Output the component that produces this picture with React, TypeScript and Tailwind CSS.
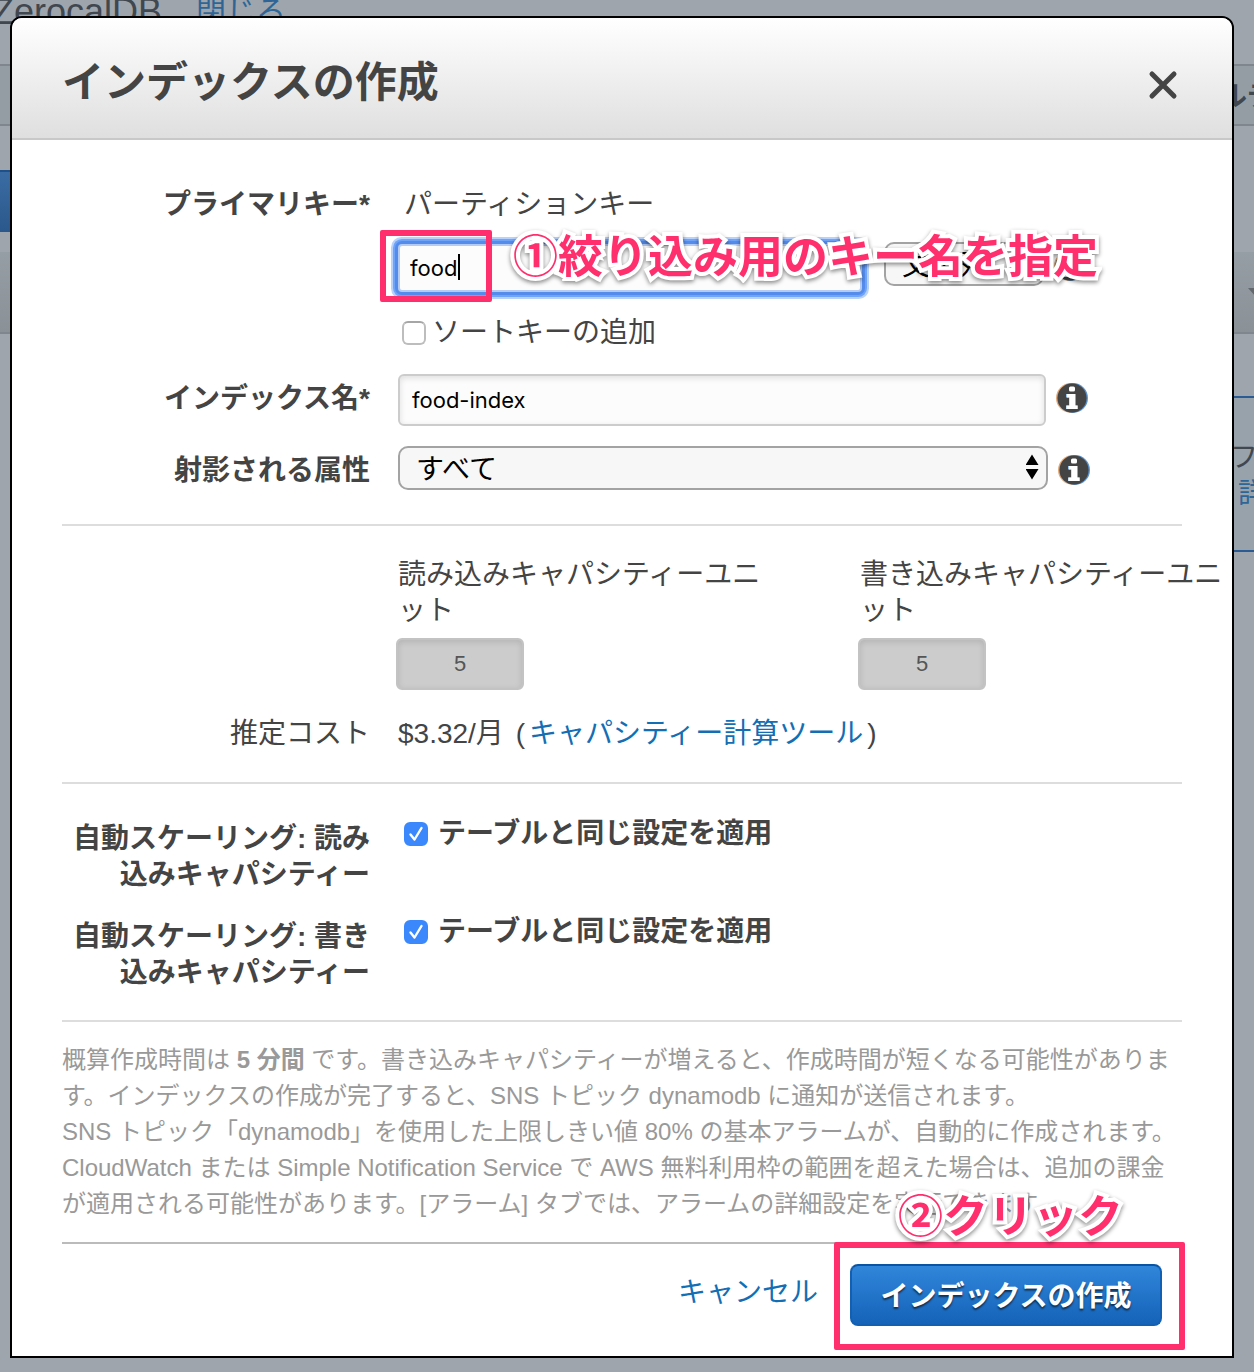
import { useState } from "react"
import type { ReactNode } from "react"

function InfoIcon() {
  return (
    <svg viewBox="0 0 32 32" className="h-8 w-8 shrink-0" aria-hidden="true">
      <circle cx="15" cy="16" r="15" fill="#e0a878" />
      <circle cx="17" cy="16" r="15" fill="#5b93cf" />
      <circle cx="16" cy="16" r="14.6" fill="#444" />
      <rect x="13" y="4.5" width="6" height="5" rx="1.5" fill="#fff" />
      <path d="M10 12h9v11.5h2.8V27H10v-3.5h3v-8h-3z" fill="#9cc4ee" />
      <path d="M11 12h8.5v11.5h2V27H10.5v-3.5h3v-8H11z" fill="#fff" />
    </svg>
  )
}

function SelectArrows() {
  return (
    <svg viewBox="0 0 14 26" className="pointer-events-none absolute right-2 top-2 h-[26px] w-[14px]" aria-hidden="true">
      <path d="M6 0.5l6.5 10.5H-.5zM6 25.5l6.5-10.5H-.5z" fill="#000" />
    </svg>
  )
}

function Checkbox({ id, checked, onChange }: { id: string; checked: boolean; onChange: (v: boolean) => void }) {
  return (
    <span className="grid h-6 w-6 shrink-0">
      <input
        id={id}
        type="checkbox"
        checked={checked}
        onChange={(e) => onChange(e.target.checked)}
        className="col-start-1 row-start-1 h-6 w-6 appearance-none rounded-md border-2 border-[#bdbdbd] border-t-[#a6a6a6] bg-white checked:border-[#3b88fd] checked:bg-[#3b88fd]"
      />
      {checked && (
        <svg viewBox="0 0 24 24" className="pointer-events-none col-start-1 row-start-1 h-6 w-6" aria-hidden="true">
          <path d="M6.5 12.5l4 5L17.5 6" fill="none" stroke="#fff" strokeWidth="2.4" strokeLinecap="round" strokeLinejoin="round" />
        </svg>
      )}
    </span>
  )
}

function AutoScalingRow({ id, label, checked, onChange }: { id: string; label: string; checked: boolean; onChange: (v: boolean) => void }) {
  return (
    <div className="flex gap-[34px] font-bold">
      <div className="w-[308px] shrink-0 pt-0.5 text-right">{label}</div>
      <div className="flex h-[30px] items-center gap-[10px]">
        <Checkbox id={id} checked={checked} onChange={onChange} />
        <label htmlFor={id}>テーブルと同じ設定を適用</label>
      </div>
    </div>
  )
}

function Callout({ children }: { children: ReactNode }) {
  return (
    <span className="whitespace-nowrap text-[45px] leading-[60px] font-bold text-[#ff2f6e] [-webkit-text-stroke:8px_#fff] [paint-order:stroke_fill] drop-shadow-[0_2px_2px_rgba(0,0,0,0.45)]">
      {children}
    </span>
  )
}

function TablePage() {
  return (
    <div className="absolute inset-0 overflow-hidden bg-[#9ea5ad] text-[#40474f]" aria-hidden="true">
      <div className="flex h-16 items-start gap-[34px]">
        <span className="-mt-1.5 -ml-2 text-[36px] leading-9">ZerocalDB</span>
        <span className="-mt-1.5 text-[30px] leading-9 text-[#2f6596]">閉じる</span>
      </div>
      <div className="flex h-[62px] items-center justify-end border-y-2 border-[#7f868d] bg-[#959da4] pt-1 text-[28px] font-bold">
        <span className="-mr-[77px]">ルデータ</span>
      </div>
      <div className="h-[126px] pt-11">
        <div className="h-[62px] w-16 border-t-2 border-[#20508a] bg-linear-to-b from-[#3a6ca3] to-[#2b588c]" />
      </div>
      <div className="flex h-[82px] justify-end border-b-2 border-[#7f868d] bg-linear-to-b from-[#969ea5] to-[#8a9197] pt-9">
        <svg viewBox="0 0 14 8" className="-mr-2 h-2 w-[14px]">
          <path d="M0 0h14L7 8z" fill="#62686e" />
        </svg>
      </div>
      <div className="mt-[62px] ml-16 flex h-[156px] flex-col items-end border-y-2 border-[#2a5b94] bg-[#98a2aa] pt-[42px] text-[28px] leading-9">
        <span className="-mr-1">フ</span>
        <span className="-mr-3 text-[#2f6596]">詳</span>
      </div>
    </div>
  )
}

export default function App() {
  const [keyName, setKeyName] = useState("food")
  const [keyType, setKeyType] = useState("string")
  const [indexName, setIndexName] = useState("food-index")
  const [projection, setProjection] = useState("all")
  const [sortKey, setSortKey] = useState(false)
  const [scaleRead, setScaleRead] = useState(true)
  const [scaleWrite, setScaleWrite] = useState(true)

  return (
    <div className="relative min-h-screen overflow-hidden pt-4 pr-5 pb-[14px] pl-[10px] font-['Liberation_Sans','Noto_Sans_CJK_JP',sans-serif]" lang="ja">
      <TablePage />

      <div role="dialog" aria-labelledby="dialog-title" className="relative rounded-t-xl border-2 border-black bg-white text-[28px] leading-9 text-[#444]">
        <header className="flex h-[122px] items-center justify-between rounded-t-[10px] border-b-2 border-[#c8c8c8] bg-linear-to-b from-white to-[#dfdfdf] pr-[54px] pl-[50px]">
          <h1 id="dialog-title" className="pt-2.5 text-[42px] leading-[56px] font-bold">インデックスの作成</h1>
          <button type="button" aria-label="閉じる" className="mt-3.5">
            <svg viewBox="0 0 30 30" className="h-[30px] w-[30px]">
              <path d="M4 4l22 22M26 4L4 26" stroke="#444" strokeWidth="5" strokeLinecap="round" />
            </svg>
          </button>
        </header>

        <div className="px-[50px] pt-[47px]">
          <div className="flex gap-7">
            <label htmlFor="key-name" className="w-[308px] shrink-0 text-right font-bold">プライマリキー*</label>
            <div className="flex-1">
              <div className="pl-1.5">パーティションキー</div>
              <div className="relative mt-[19px] flex h-[52px] items-start gap-[10px]">
                <input
                  id="key-name"
                  type="text"
                  value={keyName}
                  onChange={(e) => setKeyName(e.target.value)}
                  className="mt-0.5 h-12 w-[464px] rounded-sm border-2 border-[#b3cbf5] bg-[#fcfcfc] px-[10px] font-['Inter'] text-[22px] text-black shadow-[0_0_0_3px_#558ceb,0_0_0_5px_#6fa4fb,0_0_0_7px_#b8d2fc] outline-none"
                />
                <div className="relative ml-3">
                  <select
                    aria-label="キーのタイプ"
                    value={keyType}
                    onChange={(e) => setKeyType(e.target.value)}
                    className="h-11 w-40 appearance-none rounded-[10px] border-2 border-[#a3a3a3] bg-[#f7f7f7] px-4 pt-1 text-[28px] leading-9 text-black"
                  >
                    <option value="string">文字列</option>
                    <option value="number">数値</option>
                  </select>
                  <SelectArrows />
                </div>
                <div className="mt-2">
                  <InfoIcon />
                </div>
                <span className="absolute top-3 left-[60px] h-[26px] w-0.5 bg-black" />
                <div className="absolute -top-3 -left-[18px] h-[72px] w-28 rounded-xs border-6 border-[#ff2f6e]" />
                <div className="absolute -top-3.5 left-[115px] flex">
                  <Callout>①絞り込み用のキー名を指定</Callout>
                </div>
              </div>
              <div className="mt-[21px] flex items-center gap-1.5 pl-1">
                <Checkbox id="sort-key" checked={sortKey} onChange={setSortKey} />
                <label htmlFor="sort-key">ソートキーの追加</label>
              </div>
            </div>
          </div>

          <div className="mt-[23px] flex items-center gap-7">
            <label htmlFor="index-name" className="w-[308px] shrink-0 pb-0.5 text-right font-bold">インデックス名*</label>
            <div className="flex flex-1 items-center gap-[10px]">
              <input
                id="index-name"
                type="text"
                value={indexName}
                onChange={(e) => setIndexName(e.target.value)}
                className="h-[52px] w-[648px] rounded-md border-2 border-[#ccc] bg-[#fcfcfc] px-3 font-['Inter'] text-[22px] text-black shadow-[inset_0_2px_6px_rgba(0,0,0,0.12)]"
              />
              <div className="pb-1">
                <InfoIcon />
              </div>
            </div>
          </div>

          <div className="mt-5 flex items-center gap-7">
            <label htmlFor="projection" className="w-[308px] shrink-0 pt-1.5 text-right font-bold">射影される属性</label>
            <div className="flex flex-1 items-center gap-[10px]">
              <div className="relative">
                <select
                  id="projection"
                  value={projection}
                  onChange={(e) => setProjection(e.target.value)}
                  className="block h-11 w-[650px] appearance-none rounded-[10px] border-2 border-[#a3a3a3] bg-[#f7f7f7] px-4 pt-1 text-[28px] leading-9 text-black"
                >
                  <option value="all">すべて</option>
                  <option value="keys">キーのみ</option>
                </select>
                <SelectArrows />
              </div>
              <div className="pt-1">
                <InfoIcon />
              </div>
            </div>
          </div>

          <hr className="mt-[34px] border-t-2 border-[#ddd]" />

          <div className="mt-[31px] ml-[334px] flex">
            <div className="w-[462px] shrink-0">
              <label htmlFor="read-units" className="block w-[370px] pl-0.5">読み込みキャパシティーユニット</label>
              <input id="read-units" type="text" disabled value="5" className="mt-[9px] block h-[52px] w-32 rounded-md border-2 border-[#c3c3c3] bg-[#ccc] text-center text-[22px] text-[#555] shadow-[inset_0_2px_6px_rgba(0,0,0,0.12)]" />
            </div>
            <div className="w-[370px] shrink-0">
              <label htmlFor="write-units" className="block w-[370px] pl-0.5">書き込みキャパシティーユニット</label>
              <input id="write-units" type="text" disabled value="5" className="mt-[9px] block h-[52px] w-32 rounded-md border-2 border-[#c3c3c3] bg-[#ccc] text-center text-[22px] text-[#555] shadow-[inset_0_2px_6px_rgba(0,0,0,0.12)]" />
            </div>
          </div>

          <div className="mt-[26px] flex gap-7">
            <div className="w-[308px] shrink-0 text-right">推定コスト</div>
            <div>
              $3.32/月 <span className="mx-1">(</span>
              <a href="#calculator" className="text-[#146eb4]">キャパシティー計算ツール</a>
              <span className="ml-1">)</span>
            </div>
          </div>

          <hr className="mt-[30px] border-t-2 border-[#ddd]" />

          <div className="mt-[35px] flex flex-col gap-6">
            <AutoScalingRow id="scale-read" label="自動スケーリング: 読み込みキャパシティー" checked={scaleRead} onChange={setScaleRead} />
            <AutoScalingRow id="scale-write" label="自動スケーリング: 書き込みキャパシティー" checked={scaleWrite} onChange={setScaleWrite} />
          </div>

          <hr className="mt-[29px] border-t-2 border-[#ddd]" />

          <div className="mt-5 text-[24px] leading-9 text-[#999]">
            <p>
              概算作成時間は <b>5 分間</b> です。書き込みキャパシティーが増えると、作成時間が短くなる可能性があります。インデックスの作成が完了すると、SNS トピック dynamodb に通知が送信されます。
            </p>
            <p>
              SNS トピック「dynamodb」を使用した上限しきい値 80% の基本アラームが、自動的に作成されます。CloudWatch または Simple Notification Service で AWS 無料利用枠の範囲を超えた場合は、追加の課金が適用される可能性があります。[アラーム] タブでは、アラームの詳細設定を実行できます。
            </p>
          </div>

          <footer className="mt-5 flex items-center justify-end gap-8 border-t-2 border-[#bbb] pt-5 pr-5 pb-[30px]">
            <button type="button" className="pb-1 text-[#146eb4]">キャンセル</button>
            <div className="relative">
              <button
                type="button"
                className="block h-[62px] w-[312px] rounded-lg border-2 border-[#1160b4] border-t-[#0a54a3] bg-linear-to-b from-[#3086da] to-[#1463b9] pt-1 font-bold text-white [text-shadow:0_2px_2px_rgba(0,0,0,0.6)]"
              >
                インデックスの作成
              </button>
              <div className="pointer-events-none absolute -top-[22px] -left-4 h-[108px] w-[351px] rounded-xs border-6 border-[#ff2f6e]" />
              <div className="pointer-events-none absolute -top-[76px] left-12 flex">
                <Callout>②クリック</Callout>
              </div>
            </div>
          </footer>
        </div>
      </div>
    </div>
  )
}
